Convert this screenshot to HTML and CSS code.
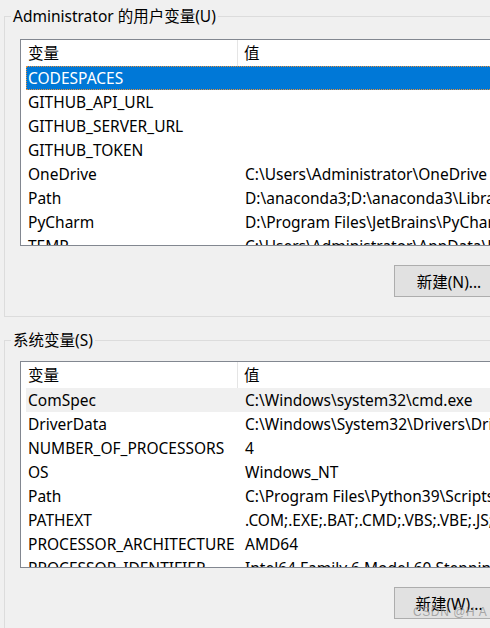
FILE: index.html
```html
<!DOCTYPE html>
<html lang="zh-CN">
<head>
<meta charset="utf-8">
<title>环境变量</title>
<link rel="stylesheet" href="styles.css">
</head>
<body>
<div class="page">
  <fieldset class="group group-user">
    <legend class="group-title">Administrator 的用户变量(U)</legend>
    <div class="list list-user">
      <div class="hdr"><div class="hcell hname">变量</div><div class="hcell hval">值</div></div>
      <div class="row sel"><div class="cname">CODESPACES</div><div class="cval"></div></div>
      <div class="row"><div class="cname">GITHUB_API_URL</div><div class="cval"></div></div>
      <div class="row"><div class="cname">GITHUB_SERVER_URL</div><div class="cval"></div></div>
      <div class="row"><div class="cname">GITHUB_TOKEN</div><div class="cval"></div></div>
      <div class="row"><div class="cname">OneDrive</div><div class="cval">C:\Users\Administrator\OneDrive</div></div>
      <div class="row"><div class="cname">Path</div><div class="cval">D:\anaconda3;D:\anaconda3\Library\mingw-w64\bin;D:\anaconda3\Library\usr\bin</div></div>
      <div class="row"><div class="cname">PyCharm</div><div class="cval">D:\Program Files\JetBrains\PyCharm 2021.3\bin;</div></div>
      <div class="row"><div class="cname">TEMP</div><div class="cval">C:\Users\Administrator\AppData\Local\Temp</div></div>
    </div>
    <div class="btns"><button class="btn">新建(N)...</button></div>
  </fieldset>

  <fieldset class="group group-sys">
    <legend class="group-title">系统变量(S)</legend>
    <div class="list list-sys">
      <div class="hdr"><div class="hcell hname">变量</div><div class="hcell hval">值</div></div>
      <div class="row hover"><div class="cname">ComSpec</div><div class="cval">C:\Windows\system32\cmd.exe</div></div>
      <div class="row"><div class="cname">DriverData</div><div class="cval">C:\Windows\System32\Drivers\DriverData</div></div>
      <div class="row"><div class="cname">NUMBER_OF_PROCESSORS</div><div class="cval">4</div></div>
      <div class="row"><div class="cname">OS</div><div class="cval">Windows_NT</div></div>
      <div class="row"><div class="cname">Path</div><div class="cval">C:\Program Files\Python39\Scripts\;C:\Program Files\Python39\</div></div>
      <div class="row"><div class="cname">PATHEXT</div><div class="cval">.COM;.EXE;.BAT;.CMD;.VBS;.VBE;.JS;.JSE;.WSF;.WSH;.MSC</div></div>
      <div class="row"><div class="cname">PROCESSOR_ARCHITECTURE</div><div class="cval">AMD64</div></div>
      <div class="row"><div class="cname">PROCESSOR_IDENTIFIER</div><div class="cval">Intel64 Family 6 Model 60 Stepping 3, GenuineIntel</div></div>
    </div>
    <div class="btns"><button class="btn">新建(W)...</button><span class="watermark">CSDN @H A I</span></div>
  </fieldset>
</div>
</body>
</html>
```
FILE: styles.css
```css
html, body {
  margin: 0;
  padding: 0;
  background: #f0f0f0;
  width: 490px;
  height: 628px;
  overflow: hidden;
}
body {
  font-family: "Noto Sans", "Noto Sans CJK SC", sans-serif;
  font-size: 15.5px;
  color: #000;
}
.page {
  width: 580px;
  padding: 6px 0 0 4px;
}
.group {
  margin: 0;
  padding: 0 0 19px 15px;
  border: 1px solid #dcdcdc;
  min-inline-size: 0;
}
.group-sys {
  margin-top: 13px;
}
.group-title {
  margin-left: -9px;
  padding: 0 2px;
  line-height: 20px;
  height: 20px;
}
.list {
  border: 1px solid #828790;
  background: #fff;
  overflow: hidden;
}
.list-user {
  margin-top: 13px;
  height: 205px;
}
.list-sys {
  margin-top: 11px;
  height: 205px;
}
.hdr {
  display: grid;
  grid-template-columns: 217px 1fr;
  height: 26px;
}
.hcell {
  line-height: 26px;
  white-space: nowrap;
}
.hname {
  padding-left: 7px;
  border-right: 1px solid #e5e5e5;
}
.hval {
  padding-left: 6px;
}
.row {
  display: grid;
  grid-template-columns: 217px 1fr;
  margin-left: 5px;
  height: 24px;
  line-height: 24px;
  white-space: nowrap;
  box-sizing: border-box;
}
.cname {
  padding-left: 2px;
  overflow: hidden;
}
.cval {
  padding-left: 2px;
  overflow: hidden;
}
.row.sel {
  background: #0078d7;
  color: #fff;
  outline: 1px dotted #e8903a;
  outline-offset: -1px;
}
.row.hover {
  background: #f0f0f0;
}
.btns {
  position: relative;
  margin-top: 19px;
  padding-left: 374px;
  height: 32px;
}
.btn {
  width: 110px;
  height: 32px;
  margin: 0;
  padding: 0;
  background: #e1e1e1;
  border: 1px solid #adadad;
  font-family: "Noto Sans", "Noto Sans CJK SC", sans-serif;
  font-size: 15.5px;
  color: #000;
}
.watermark {
  position: absolute;
  left: 393px;
  top: 18px;
  line-height: 14px;
  font-family: "Liberation Sans", sans-serif;
  font-size: 12px;
  letter-spacing: 0.6px;
  color: rgba(150, 150, 150, 0.8);
  pointer-events: none;
}
```
